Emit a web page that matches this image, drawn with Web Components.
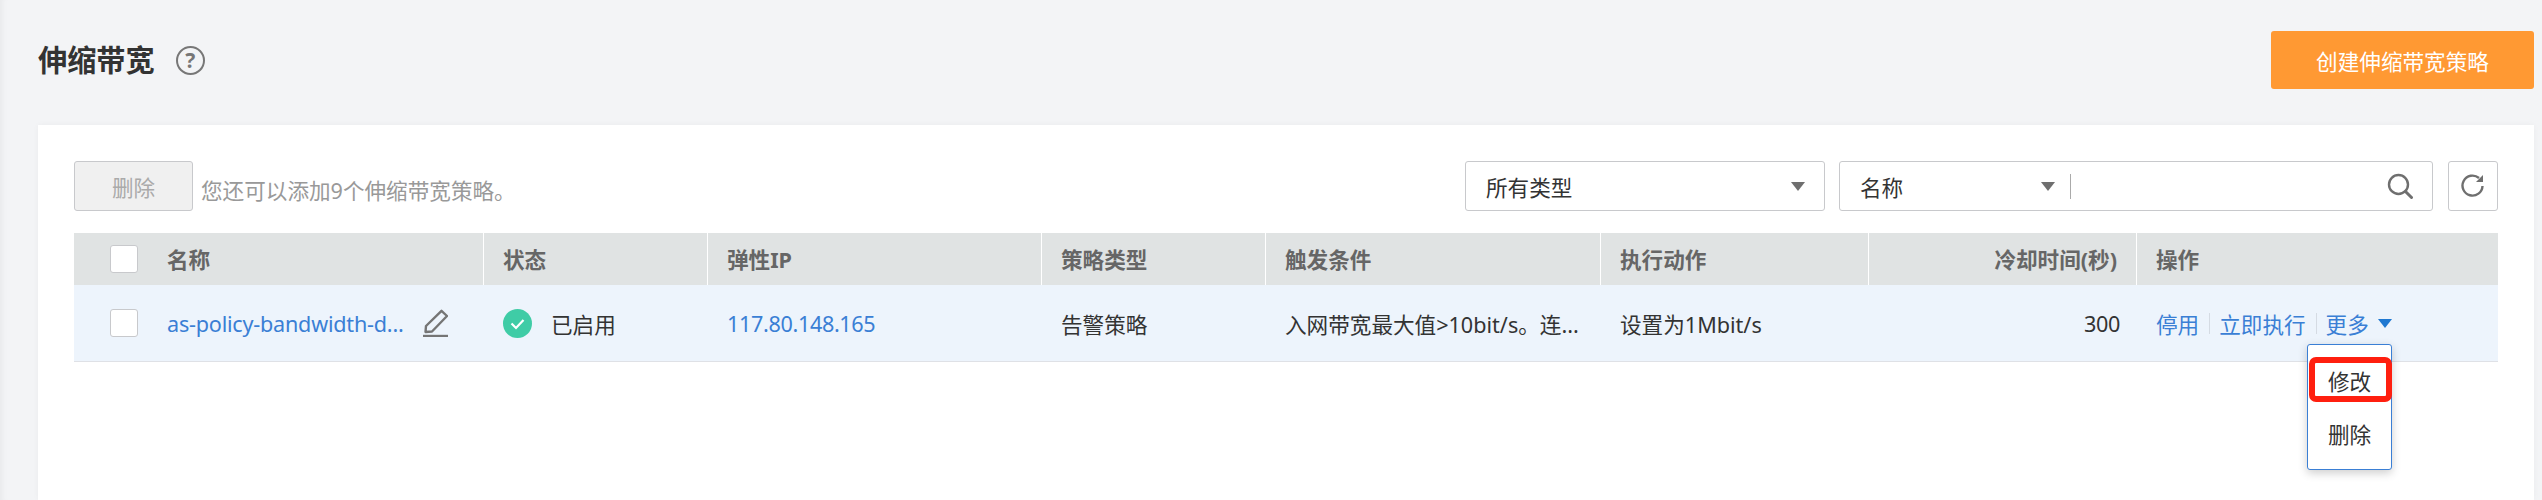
<!DOCTYPE html>
<html lang="zh-CN">
<head>
<meta charset="utf-8">
<title>伸缩带宽</title>
<style>
    html, body {
        margin: 0;
        height: 500px;
        overflow: hidden;
        background: #f3f4f6;
        color: #333;
        font-family: "Noto Sans", "Noto Sans CJK SC", sans-serif;
        font-size: 21.6px;
    }
</style>
</head>
<body>
<bandwidth-page></bandwidth-page>

<script>
    const define = (name, markup) => {
        customElements.define(name, class extends HTMLElement {
            connectedCallback() {
                if (this.shadowRoot) return;
                this.attachShadow({ mode: 'open' }).innerHTML = markup;
            }
        });
    };

    define('ui-button', `
        <style>
            :host {
                display: flex;
                align-items: center;
                justify-content: center;
                box-sizing: border-box;
                height: 50px;
                border: 1px solid #c8c9cc;
                border-radius: 3px;
                background: #fff;
                color: #333;
            }
            :host([disabled]) {
                width: 119px;
                background: #f0f0f0;
                color: #aaa;
            }
            :host([primary]) {
                width: 263px;
                height: 58px;
                border: 0;
                background: #ff9933;
                color: #fff;
            }
            :host([square]) { width: 50px; }
        </style>
        <slot></slot>
    `);

    define('ui-select', `
        <style>
            :host {
                display: flex;
                align-items: center;
                box-sizing: border-box;
                width: 360px;
                height: 50px;
                padding: 0 19px 0 20px;
                border: 1px solid #c8c9cc;
                border-radius: 3px;
                background: #fff;
            }
            span { flex: 1; }
            i {
                border-top: 9px solid #6f6f6f;
                border-left: 7px solid transparent;
                border-right: 7px solid transparent;
            }
        </style>
        <span><slot></slot></span><i></i>
    `);

    define('ui-search', `
        <style>
            :host {
                display: flex;
                align-items: center;
                box-sizing: border-box;
                width: 594px;
                height: 50px;
                padding: 0 19px 0 20px;
                border: 1px solid #c8c9cc;
                border-radius: 3px;
                background: #fff;
            }
            span { width: 181px; }
            i {
                border-top: 9px solid #6f6f6f;
                border-left: 7px solid transparent;
                border-right: 7px solid transparent;
            }
            b {
                width: 1px;
                height: 25px;
                margin-left: 15px;
                margin-right: auto;
                background: #aaa;
            }
            svg { display: block; }
        </style>
        <span><slot></slot></span><i></i><b></b>
        <svg width="26" height="26" viewBox="0 0 26 26" fill="none" stroke="#6f6f6f" stroke-width="2.4">
            <circle cx="11.5" cy="11.5" r="9.5"/>
            <path d="M18.5 18.5 L24.5 24.5" stroke-linecap="round" stroke-width="3"/>
        </svg>
    `);

    define('status-badge', `
        <style>
            :host { display: flex; align-items: center; gap: 19px; }
            svg { display: block; flex: none; }
        </style>
        <svg width="29" height="29" viewBox="0 0 29 29">
            <circle cx="14.5" cy="14.5" r="14.5" fill="#3fcca6"/>
            <path d="M8.5 14.5 L13 19 L20.5 11" fill="none" stroke="#fff" stroke-width="2.2"/>
        </svg>
        <slot></slot>
    `);

    define('more-menu', `
        <style>
            :host {
                position: absolute;
                left: 170px;
                top: 59px;
                z-index: 5;
                box-sizing: border-box;
                width: 85px;
                height: 126px;
                padding: 9px 0;
                border: 1px solid #3a7fd5;
                border-radius: 3px;
                background: #fff;
                box-shadow: 0 3px 10px rgba(0, 0, 0, .2);
                color: #333;
            }
            div {
                display: flex;
                align-items: center;
                justify-content: center;
                height: 53px;
            }
            .mark {
                position: absolute;
                left: 1px;
                top: 12px;
                box-sizing: border-box;
                width: 83px;
                height: 45px;
                border: 6px solid #ff1f0f;
                border-radius: 7px;
            }
        </style>
        <div>修改</div>
        <div>删除</div>
        <span class="mark"></span>
    `);

    define('policy-table', `
        <style>
            :host { display: block; }
            .row {
                display: grid;
                grid-template-columns: 410px 224px 334px 224px 335px 268px 268px 361px;
            }
            .head { height: 52px; background: #e0e3e3; color: #666; font-weight: 700; }
            .body { height: 77px; box-sizing: border-box; background: #edf4fc; border-bottom: 1px solid #dfe1e6; }
            .cell {
                display: flex;
                align-items: center;
                box-sizing: border-box;
                padding: 0 19px;
                min-width: 0;
                white-space: nowrap;
            }
            .head .cell { border-right: 1px solid #fff; padding-bottom: 1px; }
            .head .cell:last-child { border-right: 0; }
            .first { padding-left: 36px; }
            .check {
                flex: none;
                box-sizing: border-box;
                width: 28px;
                height: 28px;
                margin-right: 29px;
                border: 1px solid #c8c9cc;
                border-radius: 3px;
                background: #fff;
            }
            .right { justify-content: flex-end; padding-right: 19px; }
            .body .right { padding-right: 17px; }
            .link { color: #3a7fd5; }
            .tight { letter-spacing: -.35px; }
            .name { letter-spacing: -.22px; }
            .edit { display: block; margin-left: 19px; flex: none; }
            .ops { position: relative; padding-right: 0; }
            .sep { width: 1px; height: 21px; margin: 0 9px 0 10px; background: #d5dbe3; }
            .arrow {
                margin-left: 9px;
                border-top: 9px solid #1f78d1;
                border-left: 7.5px solid transparent;
                border-right: 7.5px solid transparent;
            }
        </style>
        <div class="row head">
            <div class="cell first"><span class="check"></span>名称</div>
            <div class="cell">状态</div>
            <div class="cell">弹性IP</div>
            <div class="cell">策略类型</div>
            <div class="cell">触发条件</div>
            <div class="cell">执行动作</div>
            <div class="cell right">冷却时间(秒)</div>
            <div class="cell">操作</div>
        </div>
        <div class="row body">
            <div class="cell first">
                <span class="check"></span>
                <span class="link name">as-policy-bandwidth-d...</span>
                <svg class="edit" width="25" height="28" viewBox="0 0 25 28" fill="none" stroke="#757575" stroke-width="2.4">
                    <path d="M2.5 23 L3 17 L18.5 1.8 L24 7 L9 22.5 Z" stroke-linejoin="round"/>
                    <path d="M0 27 H25"/>
                </svg>
            </div>
            <div class="cell"><status-badge>已启用</status-badge></div>
            <div class="cell link tight">117.80.148.165</div>
            <div class="cell">告警策略</div>
            <div class="cell">入网带宽最大值&gt;10bit/s。连...</div>
            <div class="cell">设置为1Mbit/s</div>
            <div class="cell right tight">300</div>
            <div class="cell ops link">
                停用<span class="sep"></span>立即执行<span class="sep"></span>更多<span class="arrow"></span>
                <more-menu></more-menu>
            </div>
        </div>
    `);

    define('bandwidth-page', `
        <style>
            :host {
                display: block;
                height: 500px;
                padding: 0 8px 0 38px;
                box-sizing: border-box;
                box-shadow: inset 7px 0 6px -5px rgba(0, 0, 0, .05);
            }
            header {
                display: flex;
                align-items: center;
                height: 125px;
                padding-bottom: 5px;
                box-sizing: border-box;
            }
            h1 { margin: 0; font-size: 29.2px; line-height: 40px; font-weight: 700; color: #333; }
            .help {
                display: flex;
                align-items: center;
                justify-content: center;
                box-sizing: border-box;
                width: 29px;
                height: 29px;
                margin: 0 auto 0 21px;
                border: 2.5px solid #777;
                border-radius: 50%;
                color: #777;
                font-size: 21px;
                font-weight: 700;
            }
            section {
                height: 375px;
                padding: 36px;
                box-sizing: border-box;
                background: #fff;
                box-shadow: 0 0 6px rgba(0, 0, 0, .04);
            }
            .toolbar {
                display: flex;
                align-items: center;
                height: 50px;
                margin-bottom: 22px;
            }
            .hint { margin-left: 8px; margin-right: auto; padding-top: 7px; color: #999; }
            .refresh { margin-left: 15px; }
            ui-search { margin-left: 14px; }
            svg { display: block; }
        </style>
        <header>
            <h1>伸缩带宽</h1>
            <span class="help">?</span>
            <ui-button primary>创建伸缩带宽策略</ui-button>
        </header>
        <section>
            <div class="toolbar">
                <ui-button disabled>删除</ui-button>
                <span class="hint">您还可以添加9个伸缩带宽策略。</span>
                <ui-select>所有类型</ui-select>
                <ui-search>名称</ui-search>
                <ui-button square class="refresh">
                    <svg width="24" height="24" viewBox="0 0 24 24" fill="none" stroke="#6f6f6f" stroke-width="2.4">
                        <path d="M21.5 12 A10 10 0 1 1 18 4"/>
                        <path d="M15 8 H22 V1 Z" fill="#6f6f6f" stroke="none"/>
                    </svg>
                </ui-button>
            </div>
            <policy-table></policy-table>
        </section>
    `);
</script>
</body>
</html>
